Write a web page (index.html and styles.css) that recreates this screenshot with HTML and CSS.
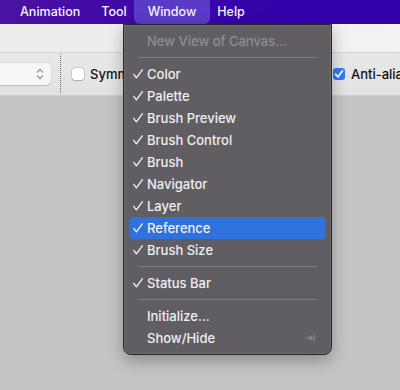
FILE: index.html
```html
<!DOCTYPE html>
<html>
<head>
<meta charset="utf-8">
<link rel="stylesheet" href="styles.css">
</head>
<body>
<div class="screen">
  <div class="menubar">
    <span class="mb-item">Animation</span>
    <span class="mb-item">Tool</span>
    <span class="mb-item active">Window</span>
    <span class="mb-item">Help</span>
  </div>
  <div class="titlebar"></div>
  <div class="toolbar">
    <div class="popup"><svg class="updown" width="8" height="12" viewBox="0 0 8 12"><path d="M1 4.5 L4 1.5 L7 4.5 M1 7.5 L4 10.5 L7 7.5" fill="none" stroke="#9a9a9a" stroke-width="1.3"/></svg></div>
    <div class="dotsep"></div>
    <label class="chk"><span class="box"></span><span class="chk-label">Symmetry</span></label>
    <div class="spacer"></div>
    <label class="chk on"><span class="box"><svg width="12" height="12" viewBox="0 0 12 12"><path d="M2.6 6.3 L5 8.8 L9.4 3" fill="none" stroke="#fff" stroke-width="1.8" stroke-linecap="round" stroke-linejoin="round"/></svg></span><span class="chk-label">Anti-alias</span></label>
  </div>
  <div class="canvas"></div>

  <div class="menu">
    <div class="row disabled"><span class="check"></span><span class="label">New View of Canvas...</span></div>
    <div class="sep"></div>
    <div class="row on"><span class="check"></span><span class="label">Color</span></div>
    <div class="row on"><span class="check"></span><span class="label">Palette</span></div>
    <div class="row on"><span class="check"></span><span class="label">Brush Preview</span></div>
    <div class="row on"><span class="check"></span><span class="label">Brush Control</span></div>
    <div class="row on"><span class="check"></span><span class="label">Brush</span></div>
    <div class="row on"><span class="check"></span><span class="label">Navigator</span></div>
    <div class="row on"><span class="check"></span><span class="label">Layer</span></div>
    <div class="row on selected"><span class="check"></span><span class="label">Reference</span></div>
    <div class="row on"><span class="check"></span><span class="label">Brush Size</span></div>
    <div class="sep"></div>
    <div class="row on"><span class="check"></span><span class="label">Status Bar</span></div>
    <div class="sep"></div>
    <div class="row"><span class="check"></span><span class="label">Initialize...</span></div>
    <div class="row"><span class="check"></span><span class="label">Show/Hide</span><svg class="shortcut" width="10" height="10" viewBox="0 0 10 10"><path d="M0.5 5 H7 M4.5 2.3 L7.2 5 L4.5 7.7 M9 1.5 V8.5" fill="none" stroke="#8f8d92" stroke-width="1.1"/></svg></div>
  </div>
</div>
</body>
</html>
```

FILE: styles.css
```css
* { box-sizing: border-box; }
html, body { margin: 0; padding: 0; }
body {
  width: 400px;
  height: 390px;
  overflow: hidden;
  font-family: Inter, "Liberation Sans", sans-serif;
}
.screen {
  position: relative;
  width: 400px;
  height: 390px;
  display: flex;
  flex-direction: column;
  background: #c4c4c4;
  overflow: hidden;
}
.menubar {
  height: 24px;
  flex: none;
  display: flex;
  align-items: center;
  padding-left: 9.5px;
  background: linear-gradient(90deg, #4a13a2 0%, #3f08a8 35%, #3400aa 70%, #3300a9 100%);
  color: #f4f2fa;
  font-size: 12.5px;
  font-weight: 500;
}
.mb-item {
  height: 24px;
  line-height: 23px;
  padding: 0 10.5px;
}
.mb-item.active {
  padding: 0 14px;
  margin: 0 -3.5px;
  background: #5a3bc8;
  border-radius: 0 0 6px 6px;
}
.titlebar {
  height: 29px;
  flex: none;
  background: linear-gradient(90deg, #ececec 0%, #efeff0 70%, #f3f3f5 100%);
  border-bottom: 1px solid #d4d4d4;
}
.toolbar {
  height: 43px;
  flex: none;
  display: flex;
  align-items: center;
  background: linear-gradient(180deg, #e8e8e8 0%, #e2e2e2 100%);
  border-bottom: 1px solid #cdcdcd;
}
.popup {
  width: 52px;
  height: 22px;
  margin-left: -1px;
  background: #f6f6f6;
  border-radius: 0 5px 5px 0;
  box-shadow: 0 0.5px 1.5px rgba(0,0,0,0.18);
  display: flex;
  align-items: center;
  justify-content: flex-end;
  padding-right: 7px;
}
.dotsep {
  width: 1px;
  height: 40px;
  margin-left: 9px;
  background-image: linear-gradient(180deg, #6a6a6a 50%, transparent 50%);
  background-size: 1px 2px;
}
.chk {
  display: flex;
  align-items: center;
  margin-left: 11px;
  font-size: 13px;
  color: #111;
}
.box {
  width: 12px;
  height: 12px;
  flex: none;
  border-radius: 3px;
  background: #fff;
  box-shadow: 0 0 0 0.5px rgba(0,0,0,0.22), 0 0.5px 1px rgba(0,0,0,0.15);
  display: flex;
}
.chk.on .box { background: #2e7cf6; box-shadow: none; }
.chk-label { margin-left: 6px; white-space: nowrap; font-weight: 500; }
.spacer { flex: 1; }
.chk.on { margin-right: -10px; }
.canvas { flex: 1; background: #c4c4c4; }

.menu {
  position: absolute;
  left: 123px;
  top: 24px;
  width: 209px;
  height: 331px;
  padding: 5px 5px 6px;
  background: #605e63;
  border: 1px solid #262528;
  border-radius: 0 0 8px 8px;
  box-shadow: 0 0 0 0.5px rgba(255,255,255,0.18) inset, 0 6px 16px rgba(0,0,0,0.28);
  color: #efeef0;
  font-size: 13px;
  font-weight: 500;
}
.row {
  height: 22px;
  display: flex;
  align-items: center;
  border-radius: 4px;
  position: relative;
}
.row.selected { background: #2f72dc; }
.row.disabled { color: #8e8c91; }
.check {
  width: 18px;
  height: 22px;
  flex: none;
  position: relative;
}
.row.on .check::before {
  content: "";
  position: absolute;
  left: 4px;
  top: 6px;
  width: 10px;
  height: 10px;
  background: url("data:image/svg+xml,%3Csvg xmlns='http://www.w3.org/2000/svg' width='10' height='10' viewBox='0 0 10 10'%3E%3Cpath d='M0.8 5.4 L3.4 8.8 L9.3 0.8' fill='none' stroke='%23f2f1f3' stroke-width='1.35' stroke-linecap='round' stroke-linejoin='round'/%3E%3C/svg%3E") no-repeat;
}
.label { white-space: nowrap; }
.shortcut { position: absolute; right: 11px; top: 6px; }
.sep {
  height: 11px;
  display: flex;
  align-items: center;
  padding: 0 9px;
}
.sep::before {
  content: "";
  flex: 1;
  height: 1px;
  background: #7f7d82;
}
```
